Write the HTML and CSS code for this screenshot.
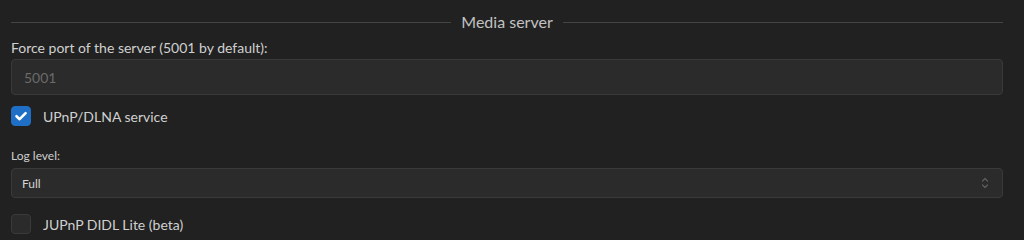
FILE: index.html
```html
<!DOCTYPE html>
<html>
<head>
<meta charset="utf-8">
<link rel="stylesheet" href="styles.css">
</head>
<body>
<div class="panel">
  <div class="section-title">
    <span class="rule"></span>
    <span class="title-text">Media server</span>
    <span class="rule"></span>
  </div>
  <label class="field-label">Force port of the server (5001 by default):</label>
  <div class="text-input"><span class="placeholder">5001</span></div>
  <div class="check-row">
    <span class="checkbox checked">
      <svg viewBox="0 0 20 20" width="20" height="20"><path d="M5.5 10.2 L8.6 13.2 L14.6 7.2" fill="none" stroke="#ffffff" stroke-width="2.6" stroke-linecap="round" stroke-linejoin="round"/></svg>
    </span>
    <span class="check-label">UPnP/DLNA service</span>
  </div>
  <label class="small-label">Log level:</label>
  <div class="select">
    <span class="select-value">Full</span>
    <svg class="select-arrows" viewBox="0 0 8 12" width="8" height="12"><path d="M1.5 4 L4 1.5 L6.5 4 M1.5 8 L4 10.5 L6.5 8" fill="none" stroke="#5e5e5e" stroke-width="1.2" stroke-linecap="round" stroke-linejoin="round"/></svg>
  </div>
  <div class="check-row second">
    <span class="checkbox"></span>
    <span class="check-label">JUPnP DIDL Lite (beta)</span>
  </div>
</div>
</body>
</html>
```

FILE: styles.css
```css
html, body {
  margin: 0;
  padding: 0;
  background: #212121;
  overflow: hidden;
}
body {
  font-family: "Lato", "Noto Sans", sans-serif;
  color: #cfcfcf;
}
.panel {
  width: 992px;
  margin-left: 11px;
  display: flex;
  flex-direction: column;
}
.section-title {
  display: flex;
  align-items: center;
  gap: 10px;
  height: 24px;
  margin-top: 10px;
}
.rule {
  flex: 1;
  height: 1px;
  background: #444444;
}
.title-text {
  font-size: 16px;
  line-height: 24px;
  color: #c2c2c2;
}
.field-label {
  margin-top: 4px;
  font-size: 14px;
  line-height: 20px;
  color: #d0d0d0;
}
.text-input {
  margin-top: 1px;
  height: 36px;
  box-sizing: border-box;
  border: 1px solid #3a3a3a;
  border-radius: 4px;
  background: #2b2b2b;
  display: flex;
  align-items: center;
  padding-left: 12px;
}
.placeholder {
  font-size: 14px;
  color: #6a6a6a;
}
.check-row {
  display: flex;
  align-items: center;
  gap: 12px;
  margin-top: 11px;
  height: 20px;
}
.check-row.second {
  margin-top: 16px;
}
.checkbox {
  width: 20px;
  height: 20px;
  box-sizing: border-box;
  border-radius: 4px;
  background: #2b2b2b;
  border: 1px solid #3a3a3a;
  display: flex;
}
.checkbox.checked {
  background: #1f6fc6;
  border-color: #1f6fc6;
}
.checkbox svg {
  margin: -1px;
}
.check-label {
  font-size: 14px;
  color: #d0d0d0;
}
.small-label {
  margin-top: 22px;
  font-size: 12px;
  line-height: 16px;
  color: #cfcfcf;
}
.select {
  margin-top: 4px;
  height: 30px;
  box-sizing: border-box;
  border: 1px solid #3a3a3a;
  border-radius: 4px;
  background: #2b2b2b;
  display: flex;
  align-items: center;
  justify-content: space-between;
  padding: 0 13px 0 10px;
}
.select-value {
  font-size: 12px;
  color: #d4d4d4;
}
```
